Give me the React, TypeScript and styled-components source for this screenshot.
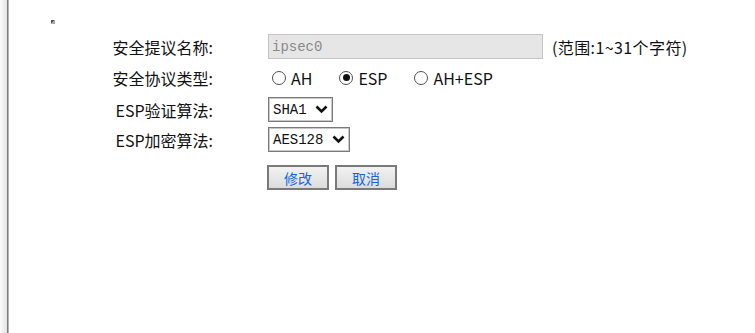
import React from "react";
import styled, { createGlobalStyle } from "styled-components";

const GlobalStyle = createGlobalStyle`
  html, body {
    margin: 0;
    padding: 0;
    background: #fff;
  }
  body {
    font-family: "Noto Sans CJK SC", "Noto Sans", sans-serif;
    color: #111;
  }
`;

const Page = styled.div`
  display: flex;
  width: 755px;
  height: 333px;
  overflow: hidden;
`;

const SideShade = styled.div`
  width: 7px;
  flex: none;
  background: linear-gradient(to right, #fbfbfb, #e2e2e2);
`;

const Frame = styled.div`
  flex: 1;
  border-left: 1px solid #7c7c7c;
  box-shadow: inset 1px 0 0 #b4b4b4;
  padding-left: 1px;
  padding-top: 20px;
`;

const BrokenImg = styled.div`
  width: 4px;
  height: 4px;
  margin-left: 42px;
  background: linear-gradient(135deg, #555 0 50%, #aaa 50% 100%);
`;

const Form = styled.div`
  display: flex;
  flex-direction: column;
  margin-top: 10px;
  padding-left: 89px;
`;

const Row = styled.div<{ $mt?: number }>`
  display: flex;
  align-items: center;
  height: 25px;
  margin-top: ${(p) => p.$mt ?? 0}px;
`;

const Label = styled.div`
  width: 115px;
  margin-right: 55px;
  text-align: right;
  font-size: 16px;
  white-space: nowrap;
`;

const Spacer = styled.div`
  width: 170px;
`;

const TextInput = styled.input`
  box-sizing: border-box;
  width: 275px;
  height: 25px;
  border: 1px solid #c4c4c4;
  background: #e6e6e6;
  color: #8a8a8a;
  font-family: "Liberation Mono", monospace;
  font-size: 14px;
  padding: 0 3px;
  outline: none;
`;

const Hint = styled.span`
  margin-left: 9px;
  font-size: 16px;
  letter-spacing: 0.4px;
`;

const RadioGroup = styled.div`
  display: flex;
  align-items: center;
  gap: 27px;
  padding-left: 4px;
`;

const RadioLabel = styled.label`
  display: flex;
  align-items: center;
  gap: 5px;
  font-size: 16px;
`;

const RadioDot = styled.span<{ $on?: boolean }>`
  position: relative;
  box-sizing: border-box;
  width: 14px;
  height: 14px;
  border-radius: 50%;
  border: 1px solid #505050;
  background: #fff;
  &::after {
    content: "";
    display: ${(p) => (p.$on ? "block" : "none")};
    position: absolute;
    left: 2.5px;
    top: 2.5px;
    width: 7px;
    height: 7px;
    border-radius: 50%;
    background: #111;
  }
`;

const SelectBox = styled.div<{ $w: number }>`
  box-sizing: border-box;
  display: flex;
  align-items: center;
  justify-content: space-between;
  width: ${(p) => p.$w}px;
  height: 25px;
  border: 1px solid #7a7a7a;
  box-shadow: inset 0 0 0 1px #c8c8c8;
  background: #fff;
  padding: 0 4px 0 4px;
  font-family: "Liberation Mono", monospace;
  font-size: 14px;
  color: #111;
`;

const ButtonRow = styled.div`
  display: flex;
  gap: 6px;
  margin-left: -1px;
`;

const Btn = styled.button`
  box-sizing: border-box;
  width: 62px;
  height: 25px;
  border: 2px solid #7a7a7a;
  background: linear-gradient(#f2f2f2, #dcdcdc);
  color: #1565e0;
  font-family: "Noto Sans CJK SC", sans-serif;
  font-size: 14px;
  padding: 0;
`;

const Chevron = () => (
  <svg width="13" height="9" viewBox="0 0 13 9">
    <path d="M1.5 1.5 L6.5 6.5 L11.5 1.5" fill="none" stroke="#111" strokeWidth="2.6" />
  </svg>
);

const Radio = ({ label, on }: { label: string; on?: boolean }) => (
  <RadioLabel>
    <RadioDot $on={on} />
    {label}
  </RadioLabel>
);

export default function App() {
  return (
    <Page>
      <GlobalStyle />
      <SideShade />
      <Frame>
        <BrokenImg />
        <Form>
          <Row>
            <Label>安全提议名称:</Label>
            <TextInput value="ipsec0" disabled readOnly />
            <Hint>(范围:1~31个字符)</Hint>
          </Row>
          <Row $mt={6}>
            <Label>安全协议类型:</Label>
            <RadioGroup>
              <Radio label="AH" />
              <Radio label="ESP" on />
              <Radio label="AH+ESP" />
            </RadioGroup>
          </Row>
          <Row $mt={7}>
            <Label>ESP验证算法:</Label>
            <SelectBox $w={65}>
              SHA1
              <Chevron />
            </SelectBox>
          </Row>
          <Row $mt={5}>
            <Label>ESP加密算法:</Label>
            <SelectBox $w={82}>
              AES128
              <Chevron />
            </SelectBox>
          </Row>
          <Row $mt={13}>
            <Spacer />
            <ButtonRow>
              <Btn>修改</Btn>
              <Btn>取消</Btn>
            </ButtonRow>
          </Row>
        </Form>
      </Frame>
    </Page>
  );
}
